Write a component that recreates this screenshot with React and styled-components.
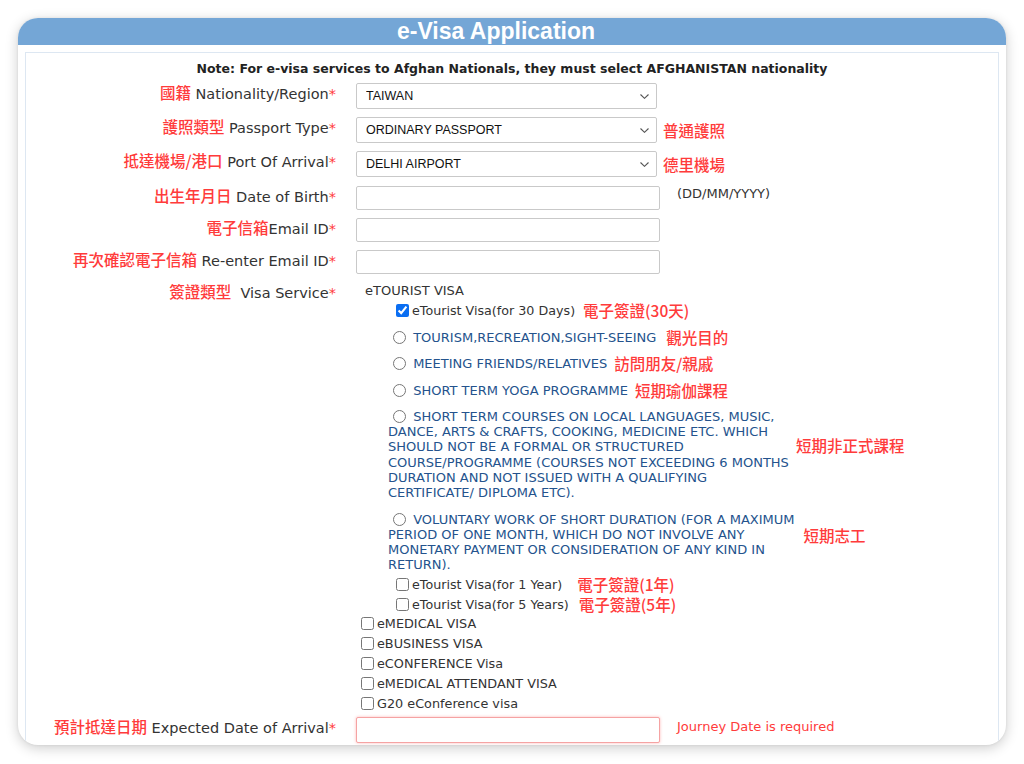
import React from "react";
import styled, { createGlobalStyle } from "styled-components";

const GlobalStyle = createGlobalStyle`
    html, body {
        margin: 0;
        padding: 0;
        background: #fff;
    }
    body {
        font-family: "DejaVu Sans", Verdana, sans-serif;
        color: #333;
    }
`;

const RED = "#ff3b3b";

const Page = styled.div`
    width: 1024px;
    height: 764px;
    padding: 18px;
    box-sizing: border-box;
`;

const Card = styled.div`
    height: 727px;
    border-radius: 20px;
    background: #fff;
    box-shadow: 0 3px 13px rgba(0, 0, 0, 0.2), 0 0 3px rgba(0, 0, 0, 0.07);
    overflow: hidden;
    display: flex;
    flex-direction: column;
`;

const Header = styled.h1`
    margin: 0;
    height: 27px;
    padding-right: 32px;
    background: #74a6d6;
    color: #fff;
    font: bold 23px/27px "Liberation Sans", Arial, sans-serif;
    text-align: center;
`;

const Body = styled.div`
    flex: 1;
    margin: 7px 7px 0;
    padding-top: 7px;
    border: 1px solid #dde7f2;
    border-bottom: none;
`;

const Note = styled.p`
    margin: 0 0 6px;
    font-size: 12.5px;
    font-weight: bold;
    line-height: 17px;
    color: #222;
    text-align: center;
`;

const Row = styled.div`
    display: grid;
    grid-template-columns: 310px 1fr;
    column-gap: 20px;
    align-items: start;
    margin-bottom: ${p => p.$gap ?? 8}px;
`;

const Label = styled.label`
    text-align: right;
    font-size: 14.5px;
    line-height: 19px;
    color: #333;
    white-space: nowrap;
`;

const Zh = styled.span`
    color: ${RED};
    font-family: "Noto Sans CJK TC", "Noto Sans CJK SC", sans-serif;
    font-size: 15.5px;
    font-weight: 500;
`;

const Req = styled.span`
    color: ${RED};
`;

const Field = styled.div`
    display: flex;
    align-items: center;
    gap: ${p => p.$gap ?? 6}px;
`;

const SelectWrap = styled.div`
    position: relative;
    width: 301px;
    height: 26px;
`;

const Select = styled.select`
    appearance: none;
    width: 100%;
    height: 100%;
    box-sizing: border-box;
    border: 1px solid #c9c9c9;
    border-radius: 2px;
    background: #fff;
    padding: 0 0 0 9px;
    font: 12.5px "Liberation Sans", Arial, sans-serif;
    color: #111;
    outline: none;
`;

const Chevron = styled.svg`
    position: absolute;
    right: 8px;
    top: 11px;
    pointer-events: none;
`;

const TextInput = styled.input`
    width: 304px;
    height: ${p => (p.$error ? 26 : 24)}px;
    box-sizing: border-box;
    border: 1px solid ${p => (p.$error ? "#f5a3a3" : "#c9c9c9")};
    border-radius: 2px;
    box-shadow: ${p => (p.$error ? "0 0 3px rgba(255, 90, 90, 0.45)" : "none")};
    padding: 0 8px;
    font: 13px "DejaVu Sans", sans-serif;
    outline: none;
`;

const Hint = styled.span`
    align-self: flex-start;
    font-size: 13px;
    line-height: ${p => (p.$error ? 20 : 16)}px;
    color: ${p => (p.$error ? RED : "#333")};
`;

const ZhNote = styled.span`
    color: ${RED};
    font-family: "Noto Sans CJK TC", "Noto Sans CJK SC", sans-serif;
    font-size: 15.5px;
    font-weight: 500;
    line-height: 15px;
    white-space: nowrap;
    margin-left: ${p => p.$ml ?? 8}px;
    margin-bottom: ${p => p.$lift ?? 0}px;
`;

const VisaBlock = styled.div`
    display: flex;
    flex-direction: column;
`;

const GroupTitle = styled.div`
    padding-left: 9px;
    font-size: 13px;
    line-height: 17px;
    color: #333;
`;

const CheckItem = styled.label`
    display: flex;
    align-items: center;
    height: ${p => p.$h ?? 20}px;
    padding-left: ${p => p.$indent}px;
    margin-top: ${p => p.$mt ?? 0}px;
    font-size: ${p => p.$size}px;
    color: #333;
    white-space: nowrap;
`;

const Box = styled.input.attrs({ type: "checkbox" })`
    width: 13px;
    height: 13px;
    margin: 0 3px 0 4px;
    accent-color: #0a6ef2;
`;

const RadioList = styled.div`
    display: flex;
    flex-direction: column;
    gap: 11.3px;
    padding-left: 32px;
    margin: 9.5px 0 2.5px;
`;

const RadioOption = styled.div`
    display: flex;
    align-items: center;
`;

const OptionText = styled.label`
    font-size: 13px;
    line-height: 15.2px;
    color: #24538d;
    white-space: nowrap;
`;

const Radio = styled.input.attrs({ type: "radio", name: "purpose" })`
    width: 13px;
    height: 13px;
    margin: 1px 3px 0 5px;
    vertical-align: top;
`;

const purposes = [
    { lines: ["TOURISM,RECREATION,SIGHT-SEEING"], zh: "觀光目的", ml: 10 },
    { lines: ["MEETING FRIENDS/RELATIVES"], zh: "訪問朋友/親戚", ml: 7 },
    { lines: ["SHORT TERM YOGA PROGRAMME"], zh: "短期瑜伽課程", ml: 7 },
    {
        lines: [
            "SHORT TERM COURSES ON LOCAL LANGUAGES, MUSIC,",
            "DANCE, ARTS & CRAFTS, COOKING, MEDICINE ETC. WHICH",
            "SHOULD NOT BE A FORMAL OR STRUCTURED",
            "COURSE/PROGRAMME (COURSES NOT EXCEEDING 6 MONTHS",
            "DURATION AND NOT ISSUED WITH A QUALIFYING",
            "CERTIFICATE/ DIPLOMA ETC).",
        ],
        zh: "短期非正式課程",
        ml: 7,
        lift: 18,
    },
    {
        lines: [
            "VOLUNTARY WORK OF SHORT DURATION (FOR A MAXIMUM",
            "PERIOD OF ONE MONTH, WHICH DO NOT INVOLVE ANY",
            "MONETARY PAYMENT OR CONSIDERATION OF ANY KIND IN",
            "RETURN).",
        ],
        zh: "短期志工",
        ml: 9,
        lift: 12,
    },
];

const otherVisas = ["eMEDICAL VISA", "eBUSINESS VISA", "eCONFERENCE Visa", "eMEDICAL ATTENDANT VISA", "G20 eConference visa"];

const Arrow = () => (
    <Chevron width="9" height="5" viewBox="0 0 9 5">
        <polyline points="0.5,0.5 4.5,4.3 8.5,0.5" fill="none" stroke="#555" strokeWidth="1.1" />
    </Chevron>
);

const Dropdown = ({ value }) => (
    <SelectWrap>
        <Select defaultValue={value}>
            <option value={value}>{value}</option>
        </Select>
        <Arrow />
    </SelectWrap>
);

const FieldLabel = ({ zh, en }) => (
    <Label>
        <Zh>{zh}</Zh>{en}<Req>*</Req>
    </Label>
);

const App = () => {
    return (
        <Page>
            <GlobalStyle />
            <Card>
                <Header>e-Visa Application</Header>
                <Body>
                    <Note>Note: For e-visa services to Afghan Nationals, they must select AFGHANISTAN nationality</Note>

                    <Row>
                        <FieldLabel zh="國籍" en=" Nationality/Region" />
                        <Field><Dropdown value="TAIWAN" /></Field>
                    </Row>
                    <Row>
                        <FieldLabel zh="護照類型" en=" Passport Type" />
                        <Field>
                            <Dropdown value="ORDINARY PASSPORT" />
                            <ZhNote $ml={0}>普通護照</ZhNote>
                        </Field>
                    </Row>
                    <Row $gap={9}>
                        <FieldLabel zh="抵達機場/港口" en=" Port Of Arrival" />
                        <Field>
                            <Dropdown value="DELHI AIRPORT" />
                            <ZhNote $ml={0}>德里機場</ZhNote>
                        </Field>
                    </Row>
                    <Row>
                        <FieldLabel zh="出生年月日" en=" Date of Birth" />
                        <Field $gap={17}>
                            <TextInput />
                            <Hint>(DD/MM/YYYY)</Hint>
                        </Field>
                    </Row>
                    <Row>
                        <FieldLabel zh="電子信箱" en="Email ID" />
                        <Field><TextInput /></Field>
                    </Row>
                    <Row>
                        <FieldLabel zh="再次確認電子信箱" en=" Re-enter Email ID" />
                        <Field><TextInput /></Field>
                    </Row>

                    <Row $gap={3}>
                        <FieldLabel zh="簽證類型" en={"\u00a0 Visa Service"} />
                        <VisaBlock>
                            <GroupTitle>eTOURIST VISA</GroupTitle>
                            <CheckItem $indent={36} $size={12.7} $mt={1}>
                                <Box defaultChecked />eTourist Visa(for 30 Days)
                                <ZhNote>電子簽證(30天)</ZhNote>
                            </CheckItem>

                            <RadioList>
                                {purposes.map((p, i) => (
                                    <RadioOption key={i}>
                                        <OptionText>
                                            <Radio /> {p.lines.map((line, j) => (
                                                <React.Fragment key={j}>
                                                    {j > 0 && <br />}
                                                    {line}
                                                </React.Fragment>
                                            ))}
                                        </OptionText>
                                        <ZhNote $ml={p.ml} $lift={p.lift}>{p.zh}</ZhNote>
                                    </RadioOption>
                                ))}
                            </RadioList>

                            <CheckItem $indent={36} $size={12.7}>
                                <Box />eTourist Visa(for 1 Year)
                                <ZhNote $ml={15}>電子簽證(1年)</ZhNote>
                            </CheckItem>
                            <CheckItem $indent={36} $size={12.7} $h={19}>
                                <Box />eTourist Visa(for 5 Years)
                                <ZhNote $ml={10}>電子簽證(5年)</ZhNote>
                            </CheckItem>

                            {otherVisas.map(v => (
                                <CheckItem key={v} $indent={1} $size={12.8}>
                                    <Box />{v}
                                </CheckItem>
                            ))}
                        </VisaBlock>
                    </Row>

                    <Row>
                        <FieldLabel zh="預計抵達日期" en=" Expected Date of Arrival" />
                        <Field $gap={17}>
                            <TextInput $error />
                            <Hint $error>Journey Date is required</Hint>
                        </Field>
                    </Row>
                </Body>
            </Card>
        </Page>
    );
};

export default App;
